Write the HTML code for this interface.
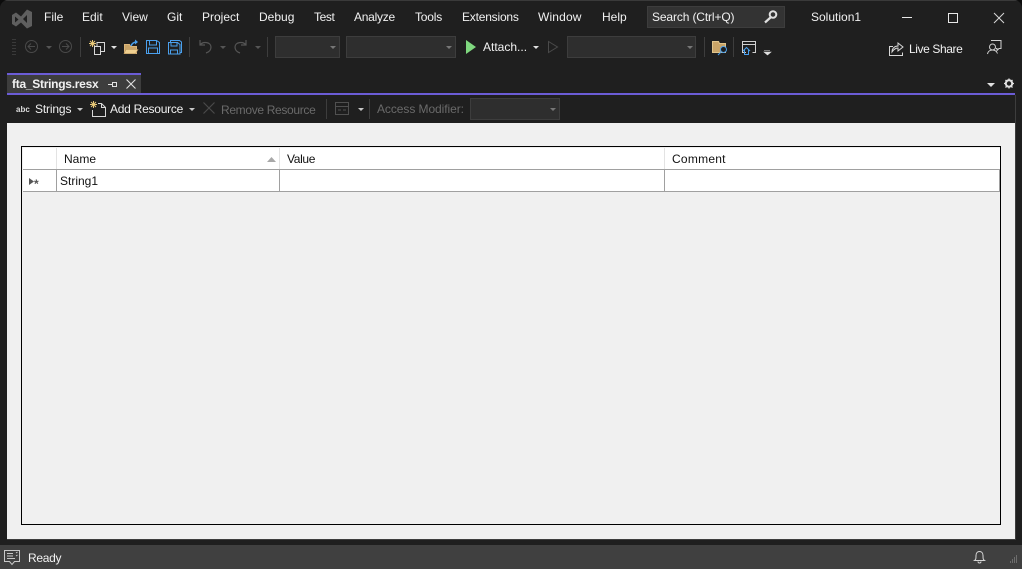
<!DOCTYPE html>
<html><head><meta charset="utf-8"><style>
html,body{margin:0;padding:0;background:#0c0c0c}
#p{position:relative;width:1022px;height:569px;overflow:hidden;background:#1f1f1f;font:12px/16px "Liberation Sans",sans-serif;color:#f1f1f1;border-radius:8px 8px 0 0}
#p div{position:absolute}
.t{white-space:nowrap}
.d{color:#6a6a6a}
.k{color:#111}
.c{background:#2e2e2e;border:1px solid #3d3d3d;box-sizing:border-box}
svg{position:absolute;left:0;top:0}
</style></head><body><div id="p">
<div style="left:0;top:0;width:1022px;height:1px;background:#3a3a3a"></div>
<div class="t" style="left:44px;top:9px">File</div>
<div class="t" style="left:82px;top:9px">Edit</div>
<div class="t" style="left:122px;top:9px">View</div>
<div class="t" style="left:167px;top:9px">Git</div>
<div class="t" style="left:202px;top:9px">Project</div>
<div class="t" style="left:259px;top:9px">Debug</div>
<div class="t" style="left:314px;top:9px;letter-spacing:-.4px">Test</div>
<div class="t" style="left:354px;top:9px;letter-spacing:-.25px">Analyze</div>
<div class="t" style="left:415px;top:9px;letter-spacing:-.2px">Tools</div>
<div class="t" style="left:462px;top:9px;letter-spacing:-.2px">Extensions</div>
<div class="t" style="left:538px;top:9px;letter-spacing:.15px">Window</div>
<div class="t" style="left:602px;top:9px">Help</div>
<div style="left:647px;top:6px;width:138px;height:22px;background:#333;border:1px solid #3d3d3d;box-sizing:border-box"></div>
<div class="t" style="left:652px;top:9px;letter-spacing:-.13px">Search (Ctrl+Q)</div>
<div class="t" style="left:811px;top:9px">Solution1</div>
<div class="c" style="left:275px;top:36px;width:65px;height:22px"></div>
<div class="c" style="left:346px;top:36px;width:110px;height:22px"></div>
<div class="c" style="left:567px;top:36px;width:129px;height:22px"></div>
<div class="t" style="left:483px;top:39px">Attach...</div>
<div class="t" style="left:909px;top:41px;letter-spacing:-.4px">Live Share</div>
<div style="left:7px;top:73px;width:134px;height:20px;background:#3d3d3d;border-top:2px solid #6b5cd6;box-sizing:border-box"></div>
<div class="t" style="left:12px;top:76px;font-weight:bold;letter-spacing:-.27px">fta_Strings.resx</div>
<div style="left:7px;top:93px;width:1008px;height:2px;background:#6b5cd6"></div>
<div style="left:1015px;top:95px;width:1px;height:445px;background:#3d3d3d"></div>
<div class="t" style="left:35px;top:101px;letter-spacing:-.15px">Strings</div>
<div class="t" style="left:110px;top:101px;letter-spacing:-.25px">Add Resource</div>
<div class="t d" style="left:221px;top:102px;letter-spacing:-.33px">Remove Resource</div>
<div class="t d" style="left:377px;top:101px;letter-spacing:-.07px">Access Modifier:</div>
<div class="c" style="left:470px;top:98px;width:90px;height:22px"></div>
<div style="left:7px;top:123px;width:1008px;height:416px;background:#f0f0f0"></div>
<div style="left:7px;top:539px;width:1009px;height:1px;background:#3d3d3d"></div>
<div style="left:21px;top:146px;width:980px;height:379px;border:1px solid #000;box-sizing:border-box"></div>
<div style="left:23px;top:148px;width:977px;height:44px;background:#fff"></div>
<div style="left:23px;top:169px;width:977px;height:1px;background:#a0a0a0"></div>
<div style="left:23px;top:191px;width:977px;height:1px;background:#a0a0a0"></div>
<div style="left:56px;top:148px;width:1px;height:21px;background:#e3e3e3"></div>
<div style="left:279px;top:148px;width:1px;height:21px;background:#e3e3e3"></div>
<div style="left:664px;top:148px;width:1px;height:21px;background:#e3e3e3"></div>
<div style="left:56px;top:170px;width:1px;height:22px;background:#a0a0a0"></div>
<div style="left:279px;top:170px;width:1px;height:22px;background:#a0a0a0"></div>
<div style="left:664px;top:170px;width:1px;height:22px;background:#a0a0a0"></div>
<div style="left:999px;top:170px;width:1px;height:22px;background:#a0a0a0"></div>
<div class="t k" style="left:64px;top:151px">Name</div>
<div class="t k" style="left:287px;top:151px;letter-spacing:-.35px">Value</div>
<div class="t k" style="left:672px;top:151px;letter-spacing:.25px">Comment</div>
<div class="t k" style="left:60px;top:173px">String1</div>
<div style="left:0;top:545px;width:1022px;height:24px;background:#404040"></div>
<div class="t" style="left:28px;top:550px;letter-spacing:-.3px">Ready</div>
<svg width="1022" height="569" viewBox="0 0 1022 569" fill="none">
<!-- VS logo -->
<path d="M27 9.500L32 12V26L27 28.500L21 22.500L16 26.500L12 24V15L16 12.500L21 16.500ZM15 16.500v6l3.500-3zM27 15l-4 4 4 4z" fill="#5f5f5f" fill-rule="evenodd"/>
<!-- window controls -->
<path d="M902 17.500h10" stroke="#e8e8e8"/>
<rect x="948.500" y="13.500" width="9" height="9" stroke="#e8e8e8"/>
<path d="M994 13l10 10M1004 13l-10 10" stroke="#d8d8d8"/>
<!-- search -->
<circle cx="773" cy="14.500" r="3.300" stroke="#e0e0e0" stroke-width="2"/>
<path d="M770.500 17.500L765 22.500" stroke="#e0e0e0" stroke-width="2.200"/>
<!-- grip -->
<path d="M13 39v1M15 39v1M13 42v1M15 42v1M13 45v1M15 45v1M13 48v1M15 48v1M13 51v1M15 51v1M13 54v1M15 54v1" stroke="#555"/>
<!-- back / forward -->
<circle cx="31.500" cy="46.500" r="6" stroke="#4a4a4a"/><path d="M35 46.500h-7M31 43.500l-3 3 3 3" stroke="#4a4a4a"/>
<path d="M46 46h6l-3 3z" fill="#555"/>
<circle cx="65.500" cy="46.500" r="6" stroke="#4a4a4a"/><path d="M62 46.500h7M66 43.500l3 3-3 3" stroke="#4a4a4a"/>
<!-- new project -->
<path d="M92.500 40v7M89 43.500h7M90 41l5 5M95 41l-5 5" stroke="#e8c878"/>
<path d="M96.500 42.500h8v9h-4M94.500 45.500h0" stroke="#d8d8d8"/>
<rect x="94.500" y="46.500" width="6" height="8" stroke="#d8d8d8"/>
<path d="M97 42v4" stroke="#d8d8d8"/>
<path d="M111 46h6l-3 3z" fill="#e0e0e0"/>
<!-- open -->
<path d="M124.500 44.500h5l1 2h6v7h-12z" fill="#c9a468" stroke="#dcb67a"/>
<path d="M126 49.500h12l-2.500 4H124z" fill="#f0d090" stroke="#b8945c" stroke-width=".6"/>
<path d="M131 46c1-3 3-4 6-4" stroke="#4aa0ee" stroke-width="1.400"/><path d="M135 39.500l3 2.500-3 2.500z" fill="#4aa0ee"/>
<!-- save -->
<path d="M146.500 40.500h10l3 2v11h-13z" stroke="#4aa0ee"/><path d="M149.500 41v4h7v-4M148.500 53v-5h9v5" stroke="#4aa0ee"/>
<path d="M170.500 42v-1.500h9l2 1.500v10.500h-1" stroke="#4aa0ee"/><path d="M168.500 42.500h9l2.500 2v9.500h-11.500z" stroke="#4aa0ee"/><path d="M171 43v3h6v-3M170.500 54v-4h7v4" stroke="#4aa0ee"/>
<!-- separators -->
<path d="M80.500 37v20M189.500 37v20M267.500 37v20M704.500 37v20M733.500 37v20M326.500 99v20M369.500 99v20" stroke="#3d3d3d"/>
<!-- undo redo -->
<path d="M200 40v5h5M200 45c3-4 11-3 11 2 0 3-2 5-5 6" stroke="#555" stroke-width="1.200"/>
<path d="M220 46h6l-3 3z" fill="#555"/>
<path d="M246 40v5h-5M246 45c-3-4-11-3-11 2 0 3 2 5 5 6" stroke="#555" stroke-width="1.200"/>
<path d="M255 46h6l-3 3z" fill="#555"/>
<!-- combo arrows -->
<path d="M330 46h6l-3 3zM446 46h6l-3 3zM687 46h6l-3 3zM550 108h6l-3 3z" fill="#777"/>
<!-- play -->
<path d="M466 40l10 7-10 7z" fill="#7fd87f"/>
<path d="M533 46h6l-3 3z" fill="#e0e0e0"/>
<path d="M548.500 41.500l9 5.500-9 5.500z" stroke="#4a4a4a"/>
<!-- folder search -->
<path d="M712.500 41.500h6l1 2h6v9h-13z" fill="#c9a468" stroke="#e0c48c"/>
<circle cx="723.500" cy="49.500" r="3" fill="#1f1f1f" stroke="#4aa0ee"/><path d="M721 52l-3 3" stroke="#4aa0ee"/>
<!-- home window -->
<path d="M746 52.500h-3.500v-11h13v11h-3M742.500 44.500h13" stroke="#d0d0d0"/>
<path d="M743 51l3.500-3.500 3.500 3.500M744.500 50v4.500h4V50" stroke="#4aa0ee"/>
<path d="M764 50.500h6M764 52h7l-3.500 3z" fill="#e0e0e0" stroke="#e0e0e0" stroke-width=".6"/>
<!-- live share -->
<path d="M893 46.500h-3.500v9h13v-3" stroke="#d8d8d8"/>
<path d="M892 52c0-4 3-6 6-6v-3l5 4-5 4v-3c-2 0-4 1-6 4z" stroke="#d8d8d8"/>
<!-- feedback -->
<path d="M991 40.500h10v8h-2l-2 2v-2h-1" stroke="#d0d0d0"/>
<circle cx="992.500" cy="47" r="3" stroke="#d0d0d0"/>
<path d="M987.500 54c.5-3 3-4 5-4s4 1 5 3.500" stroke="#d0d0d0"/>
<!-- tab pin & close -->
<path d="M108 84.500h4M112.500 82.500h4v4h-4z" stroke="#e0e0e0"/>
<path d="M126.500 79.500l9 9M135.500 79.500l-9 9" stroke="#e0e0e0" stroke-width="1.100"/>
<!-- overflow & gear -->
<path d="M987 83h8l-4 4z" fill="#e0e0e0"/>
<circle cx="1009" cy="83.500" r="3.200" stroke="#e0e0e0" stroke-width="2"/>
<path d="M1009 78.500v2M1009 86.500v2M1004 83.500h2M1012 83.500h2M1005.500 80l1.500 1.500M1011 86l1.500 1.500M1012.500 80l-1.500 1.500M1007 86l-1.500 1.500" stroke="#e0e0e0" stroke-width="1.300"/>
<!-- abc -->
<text x="16" y="112" font-family="Liberation Sans" font-size="8" font-weight="bold" fill="#dcdcdc">abc</text>
<path d="M77 108h6l-3 3zM189 108h6l-3 3zM358 108h6l-3 3z" fill="#c8c8c8"/>
<!-- add resource -->
<path d="M93.500 101v7M90 104.500h7M91 102l5 5M96 102l-5 5" stroke="#e8c878"/>
<path d="M98 103.500h3.500l4 4v9h-13V110M101.500 103.500v4h4" stroke="#d8d8d8"/>
<!-- remove X -->
<path d="M203.500 102.500l11 11M214.500 102.500l-11 11" stroke="#4a4a4a" stroke-width="1.200"/>
<!-- table icon -->
<rect x="335.500" y="102.500" width="13" height="12" stroke="#505050"/>
<path d="M336 106.500h12M338 110h3M343 110h3" stroke="#505050"/>
<!-- sort arrow -->
<path d="M267 162l4.500-5 4.500 5z" fill="#a8a8a8"/>
<!-- row glyph -->
<path d="M29 178v7l5-3.500z" fill="#555"/>
<text x="34" y="188" font-family="Liberation Sans" font-size="12" font-weight="bold" fill="#555">*</text>
<!-- status left -->
<path d="M4.500 550.500h15v11h-5l-2.500 3-2.500-3h-5z" stroke="#c8c8c8"/>
<path d="M7 553.500h6M7 556h6M7 558.500h8M16 553l1.500-1M16 556l1.500-1" stroke="#c8c8c8"/>
<!-- bell -->
<path d="M974.500 560.500c1.500-1 1.500-2 1.500-5 0-2.500 1.500-4 3.500-4s3.500 1.500 3.500 4c0 3 0 4 1.500 5z" stroke="#d8d8d8"/>
<path d="M978 561.500c0 2 3 2 3 0" stroke="#d8d8d8"/>
<!-- grip -->
<path d="M1016 556h1M1014 558h1M1016 558h1M1012 560h1M1014 560h1M1016 560h1M1010 562h1M1012 562h1M1014 562h1M1016 562h1" stroke="#9a9a9a"/>
</svg>
</div></body></html>
